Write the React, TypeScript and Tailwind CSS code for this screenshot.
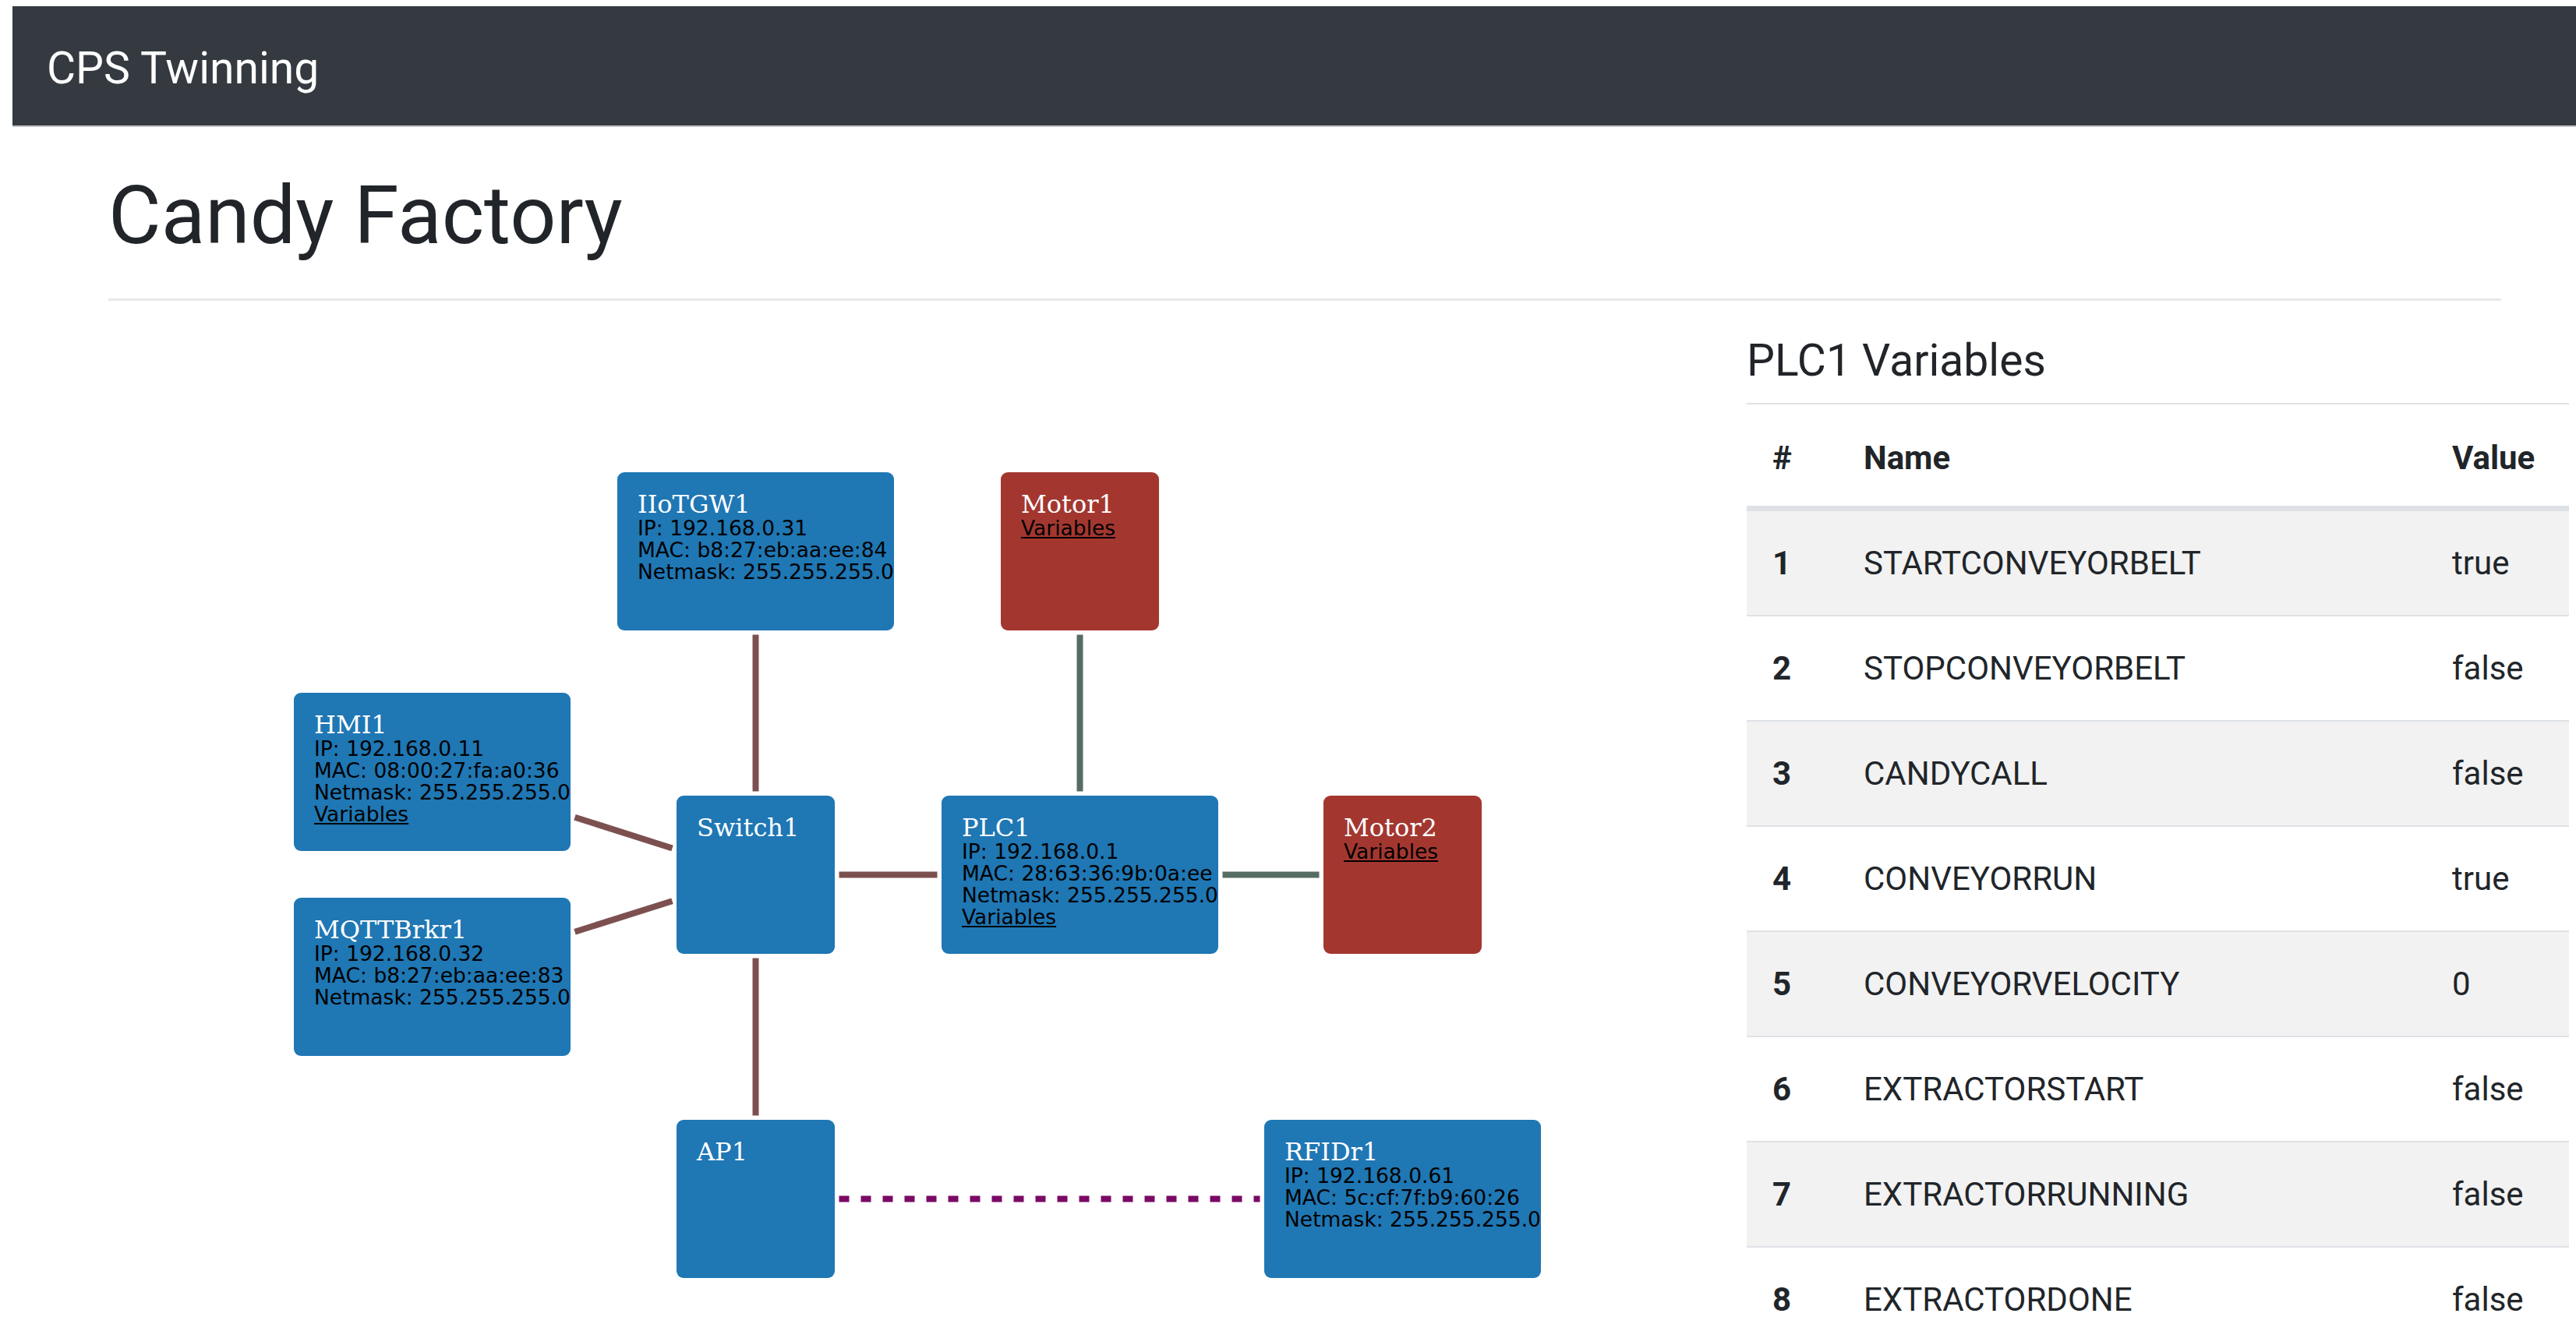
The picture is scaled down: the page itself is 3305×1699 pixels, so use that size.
import React from "react";

type NodeDef = {
  id: string;
  x: number;
  y: number;
  w: number;
  h: number;
  pos: string;
  bg: string;
  lines?: string[];
  link?: boolean;
};

const BLUE = "bg-[#1f77b4]";
const RED = "bg-[#a33730]";

const nodes: NodeDef[] = [
  {
    id: "IIoTGW1",
    x: 653,
    y: 220,
    w: 355,
    h: 203,
    pos: "left-[653px] top-[220px] w-[355px] h-[203px]",
    bg: BLUE,
    lines: ["IP: 192.168.0.31", "MAC: b8:27:eb:aa:ee:84", "Netmask: 255.255.255.0"],
  },
  {
    id: "Motor1",
    x: 1145,
    y: 220,
    w: 203,
    h: 203,
    pos: "left-[1145px] top-[220px] w-[203px] h-[203px]",
    bg: RED,
    link: true,
  },
  {
    id: "HMI1",
    x: 238,
    y: 503,
    w: 355,
    h: 203,
    pos: "left-[238px] top-[503px] w-[355px] h-[203px]",
    bg: BLUE,
    lines: ["IP: 192.168.0.11", "MAC: 08:00:27:fa:a0:36", "Netmask: 255.255.255.0"],
    link: true,
  },
  {
    id: "Switch1",
    x: 729,
    y: 635,
    w: 203,
    h: 203,
    pos: "left-[729px] top-[635px] w-[203px] h-[203px]",
    bg: BLUE,
  },
  {
    id: "PLC1",
    x: 1069,
    y: 635,
    w: 355,
    h: 203,
    pos: "left-[1069px] top-[635px] w-[355px] h-[203px]",
    bg: BLUE,
    lines: ["IP: 192.168.0.1", "MAC: 28:63:36:9b:0a:ee", "Netmask: 255.255.255.0"],
    link: true,
  },
  {
    id: "Motor2",
    x: 1559,
    y: 635,
    w: 203,
    h: 203,
    pos: "left-[1559px] top-[635px] w-[203px] h-[203px]",
    bg: RED,
    link: true,
  },
  {
    id: "MQTTBrkr1",
    x: 238,
    y: 766,
    w: 355,
    h: 203,
    pos: "left-[238px] top-[766px] w-[355px] h-[203px]",
    bg: BLUE,
    lines: ["IP: 192.168.0.32", "MAC: b8:27:eb:aa:ee:83", "Netmask: 255.255.255.0"],
  },
  {
    id: "AP1",
    x: 729,
    y: 1051,
    w: 203,
    h: 203,
    pos: "left-[729px] top-[1051px] w-[203px] h-[203px]",
    bg: BLUE,
  },
  {
    id: "RFIDr1",
    x: 1483,
    y: 1051,
    w: 355,
    h: 203,
    pos: "left-[1483px] top-[1051px] w-[355px] h-[203px]",
    bg: BLUE,
    lines: ["IP: 192.168.0.61", "MAC: 5c:cf:7f:b9:60:26", "Netmask: 255.255.255.0"],
  },
];

type EdgeDef = { a: string; b: string; color: string; dashed?: boolean };

const WIRED = "#7d5050";
const FIELD = "#566c63";
const WIRELESS = "#7a0a66";

const edges: EdgeDef[] = [
  { a: "IIoTGW1", b: "Switch1", color: WIRED },
  { a: "HMI1", b: "Switch1", color: WIRED },
  { a: "MQTTBrkr1", b: "Switch1", color: WIRED },
  { a: "Switch1", b: "PLC1", color: WIRED },
  { a: "Switch1", b: "AP1", color: WIRED },
  { a: "Motor1", b: "PLC1", color: FIELD },
  { a: "PLC1", b: "Motor2", color: FIELD },
  { a: "AP1", b: "RFIDr1", color: WIRELESS, dashed: true },
];

const GAP = 5.5;

// Segment between two node centres, trimmed at each node's outline plus a small gap.
function segment(a: NodeDef, b: NodeDef) {
  const ax = a.x + a.w / 2;
  const ay = a.y + a.h / 2;
  const bx = b.x + b.w / 2;
  const by = b.y + b.h / 2;
  const dx = bx - ax;
  const dy = by - ay;
  const exit = (n: NodeDef) =>
    Math.min(
      dx === 0 ? Infinity : (n.w / 2 + GAP) / Math.abs(dx),
      dy === 0 ? Infinity : (n.h / 2 + GAP) / Math.abs(dy)
    );
  const s0 = exit(a);
  const s1 = 1 - exit(b);
  return {
    x1: ax + dx * s0,
    y1: ay + dy * s0,
    x2: ax + dx * s1,
    y2: ay + dy * s1,
  };
}

function NodeBox({ n }: { n: NodeDef }) {
  return (
    <div className={`absolute ${n.pos} ${n.bg} rounded-[9px] pl-[26px] pt-[24px] overflow-hidden`}>
      <div className="font-['DejaVu_Serif',serif] text-[32px] leading-[34px] text-white whitespace-nowrap">
        {n.id}
      </div>
      <div className="font-['DejaVu_Sans',sans-serif] text-[26.5px] leading-[28px] text-black whitespace-nowrap">
        {n.lines?.map((l) => (
          <div key={l}>{l}</div>
        ))}
        {n.link && <div className="underline">Variables</div>}
      </div>
    </div>
  );
}

function Topology() {
  const byId = Object.fromEntries(nodes.map((n) => [n.id, n]));
  return (
    <div className="relative w-[2102px] h-[1313px] shrink-0">
      <svg className="absolute left-0 top-0" width={2102} height={1313}>
        {edges.map((e) => {
          const s = segment(byId[e.a], byId[e.b]);
          return (
            <line
              key={e.a + e.b}
              x1={s.x1}
              y1={s.y1}
              x2={s.x2}
              y2={s.y2}
              stroke={e.color}
              strokeWidth={8}
              strokeDasharray={e.dashed ? "13 15" : undefined}
            />
          );
        })}
      </svg>
      {nodes.map((n) => (
        <NodeBox key={n.id} n={n} />
      ))}
    </div>
  );
}

const variables: [string, string][] = [
  ["STARTCONVEYORBELT", "true"],
  ["STOPCONVEYORBELT", "false"],
  ["CANDYCALL", "false"],
  ["CONVEYORRUN", "true"],
  ["CONVEYORVELOCITY", "0"],
  ["EXTRACTORSTART", "false"],
  ["EXTRACTORRUNNING", "false"],
  ["EXTRACTORDONE", "false"],
];

function VariablesPanel() {
  return (
    <div className="w-[1055px] shrink-0 pt-[45px] text-[#212529]">
      <h5 className="text-[57px] leading-[63px] mb-[23px]">PLC1 Variables</h5>
      <div className="text-[42px] leading-[63px]">
        <div className="flex h-[137px] items-center pt-[6px] border-t-2 border-b-[5px] border-[#dee2e6] font-bold">
          <div className="w-[118px] pl-[33px]">#</div>
          <div className="w-[754px] pl-[32px]">Name</div>
          <div className="w-[183px] pl-[33px]">Value</div>
        </div>
        {variables.map(([name, value], i) => (
          <div
            key={name}
            className={`flex h-[135px] items-center border-t-2 border-[#dee2e6] ${
              i % 2 === 0 ? "bg-[#f2f2f2]" : "bg-white"
            }`}
          >
            <div className="w-[118px] pl-[33px] font-bold">{i + 1}</div>
            <div className="w-[754px] pl-[32px]">{name}</div>
            <div className="w-[183px] pl-[33px]">{value}</div>
          </div>
        ))}
      </div>
    </div>
  );
}

export default function App() {
  return (
    <div className="min-h-screen bg-white pl-[16px] pt-[8px] font-['Roboto',sans-serif] overflow-hidden">
      <nav className="flex h-[155px] items-center pl-[44px] pt-[5px] bg-[#343a40] border-b-2 border-[#c3c5c8]">
        <span className="text-[57px] leading-none text-white">CPS Twinning</span>
      </nav>
      <div className="pl-[123px]">
        <h1 className="mt-[51px] text-[104px] leading-[125px] text-[#212529]">Candy Factory</h1>
        <div className="mt-[44px] h-[3px] w-[3070px] bg-[#e8e8e8]" />
        <div className="flex">
          <Topology />
          <VariablesPanel />
        </div>
      </div>
    </div>
  );
}
